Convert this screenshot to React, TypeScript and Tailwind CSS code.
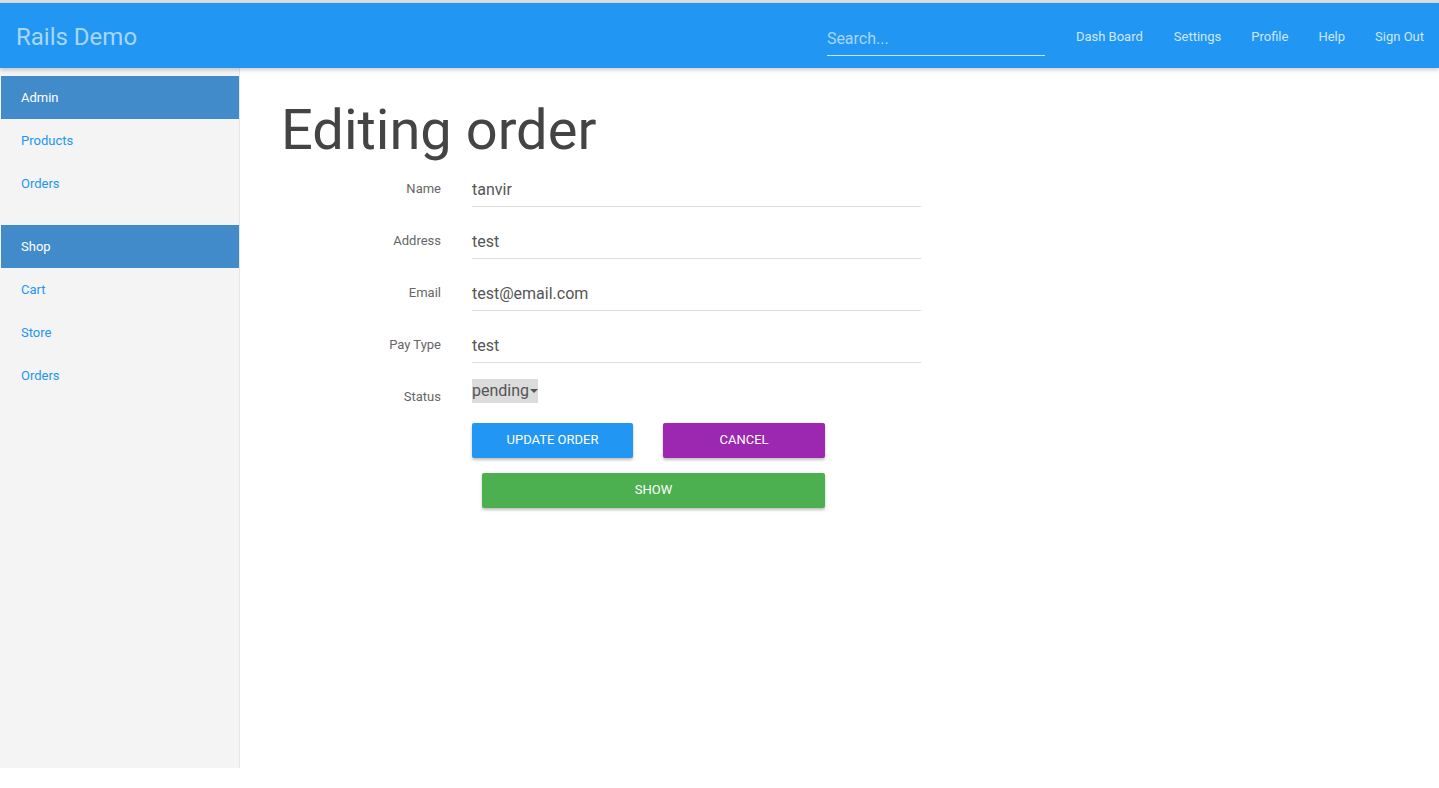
import React from 'react';

const adminLinks = ['Products', 'Orders'];
const shopLinks = ['Cart', 'Store', 'Orders'];
const navLinks = ['Dash Board', 'Settings', 'Profile', 'Help', 'Sign Out'];

const fields = [
  { label: 'Name', value: 'tanvir' },
  { label: 'Address', value: 'test' },
  { label: 'Email', value: 'test@email.com' },
  { label: 'Pay Type', value: 'test' },
];

function SideGroup({ title, links }: { title: string; links: string[] }) {
  return (
    <div className="mb-[20px]">
      <div className="h-[43px] flex items-center pl-[20px] bg-[#428bca] text-white text-[13px]">{title}</div>
      {links.map((l, i) => (
        <a key={i} href="#" className="h-[43px] flex items-center pl-[20px] text-[#2196f3] text-[13px]">
          {l}
        </a>
      ))}
    </div>
  );
}

export default function App() {
  return (
    <div className="min-h-screen bg-white font-['Roboto',sans-serif]">
      <div className="h-[3px] bg-[#dcdcdc]" />
      <header className="h-[65px] bg-[#2196f3] flex items-center pt-[3px] relative z-10 shadow-[0_2px_4px_rgba(0,0,0,0.2)]">
        <div className="pl-[16px] text-[24px] text-[#a9d6fb] leading-none">Rails Demo</div>
        <div className="ml-auto flex items-center">
          <div className="w-[218px] mr-[16px] mt-[8px] border-b border-[#c9e4fc] pt-[2px] pb-[6px] text-[16px] text-[#a9d6fb] leading-[20px]">
            Search...
          </div>
          <div className="flex">
            {navLinks.map((n) => (
              <a key={n} href="#" className="px-[15px] text-[13px] text-[#cfe7fd] first:pl-[15px] first:pr-[16px]">
                {n}
              </a>
            ))}
          </div>
        </div>
      </header>
      <div className="flex">
        <aside className="w-[240px] h-[700px] bg-[#f4f4f4] border-r border-[#e6e6e6] pl-px pt-[8px] shrink-0">
          <SideGroup title="Admin" links={adminLinks} />
          <SideGroup title="Shop" links={shopLinks} />
        </aside>
        <main className="flex-1 pl-[41px] pt-[32px]">
          <h1 className="text-[56px] leading-[1.1] text-[#444444] mb-[9px]">Editing order</h1>
          <form className="flex flex-col">
            {fields.map((f) => (
              <div key={f.label} className="flex items-center mb-[16px]">
                <label className="w-[160px] text-right text-[13px] text-[#666666]">{f.label}</label>
                <div className="ml-[31px] w-[449px] h-[36px] border-b border-[#dddddd] flex items-center pt-[3px] text-[16px] text-[#555555]">
                  {f.value}
                </div>
              </div>
            ))}
            <div className="flex h-[28px] mb-[16px]">
              <label className="w-[160px] text-right text-[13px] text-[#666666] pt-[8px]">Status</label>
              <div className="ml-[31px] flex items-center h-[24px] bg-[#dcdcdc] text-[16px] text-[#555555]">
                pending
                <span className="ml-px w-0 h-0 border-l-[4px] border-r-[4px] border-t-[4px] border-l-transparent border-r-transparent border-t-[#555555]" />
              </div>
            </div>
            <div className="ml-[191px] flex flex-col">
              <div className="flex gap-[30px] mb-[15px]">
                <button type="button" className="w-[161px] h-[35px] rounded-[2px] bg-[#2196f3] text-white text-[13px] uppercase shadow-[0_2px_3px_rgba(0,0,0,0.25)]">
                  Update Order
                </button>
                <button type="button" className="w-[162px] h-[35px] rounded-[2px] bg-[#9c27b0] text-white text-[13px] uppercase shadow-[0_2px_3px_rgba(0,0,0,0.25)]">
                  Cancel
                </button>
              </div>
              <button type="button" className="ml-[10px] w-[343px] h-[35px] rounded-[2px] bg-[#4caf50] text-white text-[13px] uppercase shadow-[0_2px_3px_rgba(0,0,0,0.25)]">
                Show
              </button>
            </div>
          </form>
        </main>
      </div>
    </div>
  );
}
